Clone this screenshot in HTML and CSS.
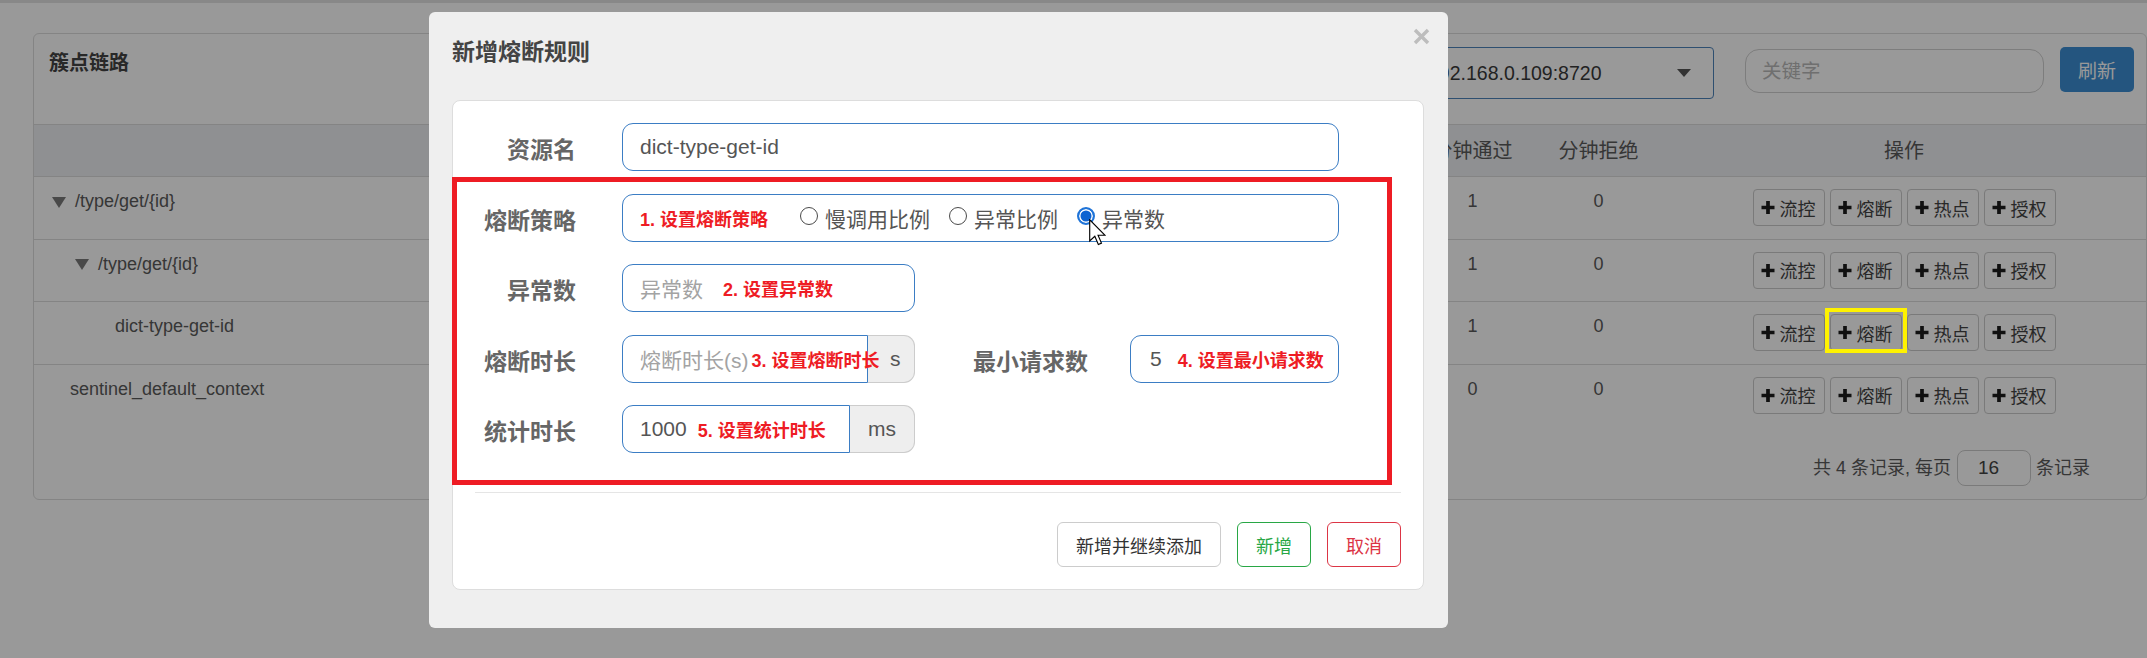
FILE: index.html
```html
<!DOCTYPE html>
<html lang="zh-CN">
<head>
<meta charset="utf-8">
<title>簇点链路</title>
<link rel="stylesheet" href="styles.css">
</head>
<body>
<div class="topbar"></div>
<section class="panel">
  <div class="panel-head">
    <h3 class="panel-title">簇点链路</h3>
    <div class="select"><span>192.168.0.109:8720</span><i class="select-caret"></i></div>
    <div class="search">关键字</div>
    <button class="btn-refresh">刷新</button>
  </div>
  <table class="tree">
    <colgroup>
      <col class="c-res"><col class="c-mid"><col class="c-mid"><col class="c-mid"><col class="c-mid"><col class="c-pass"><col class="c-block"><col class="c-op">
    </colgroup>
    <thead>
      <tr><th>资源名</th><th>通过QPS</th><th>拒绝QPS</th><th>并发数</th><th>平均RT</th><th>分钟通过</th><th>分钟拒绝</th><th>操作</th></tr>
    </thead>
    <tbody>
      <tr>
        <td class="res lv0p"><i class="tri"></i>/type/get/{id}</td>
        <td>1</td><td>0</td><td>0</td><td>2</td><td>1</td><td>0</td>
        <td><div class="ops">
          <button class="op"><svg class="plus" viewBox="0 0 14 14"><path d="M5 0h4v5h5v4H9v5H5V9H0V5h5z"/></svg>流控</button>
          <button class="op"><svg class="plus" viewBox="0 0 14 14"><path d="M5 0h4v5h5v4H9v5H5V9H0V5h5z"/></svg>熔断</button>
          <button class="op"><svg class="plus" viewBox="0 0 14 14"><path d="M5 0h4v5h5v4H9v5H5V9H0V5h5z"/></svg>热点</button>
          <button class="op"><svg class="plus" viewBox="0 0 14 14"><path d="M5 0h4v5h5v4H9v5H5V9H0V5h5z"/></svg>授权</button>
        </div></td>
      </tr>
      <tr>
        <td class="res lv1p"><i class="tri"></i>/type/get/{id}</td>
        <td>1</td><td>0</td><td>0</td><td>2</td><td>1</td><td>0</td>
        <td><div class="ops">
          <button class="op"><svg class="plus" viewBox="0 0 14 14"><path d="M5 0h4v5h5v4H9v5H5V9H0V5h5z"/></svg>流控</button>
          <button class="op"><svg class="plus" viewBox="0 0 14 14"><path d="M5 0h4v5h5v4H9v5H5V9H0V5h5z"/></svg>熔断</button>
          <button class="op"><svg class="plus" viewBox="0 0 14 14"><path d="M5 0h4v5h5v4H9v5H5V9H0V5h5z"/></svg>热点</button>
          <button class="op"><svg class="plus" viewBox="0 0 14 14"><path d="M5 0h4v5h5v4H9v5H5V9H0V5h5z"/></svg>授权</button>
        </div></td>
      </tr>
      <tr>
        <td class="res lv2">dict-type-get-id</td>
        <td>1</td><td>0</td><td>0</td><td>2</td><td>1</td><td>0</td>
        <td><div class="ops">
          <button class="op"><svg class="plus" viewBox="0 0 14 14"><path d="M5 0h4v5h5v4H9v5H5V9H0V5h5z"/></svg>流控</button>
          <button class="op"><svg class="plus" viewBox="0 0 14 14"><path d="M5 0h4v5h5v4H9v5H5V9H0V5h5z"/></svg>熔断<span class="hl"></span></button>
          <button class="op"><svg class="plus" viewBox="0 0 14 14"><path d="M5 0h4v5h5v4H9v5H5V9H0V5h5z"/></svg>热点</button>
          <button class="op"><svg class="plus" viewBox="0 0 14 14"><path d="M5 0h4v5h5v4H9v5H5V9H0V5h5z"/></svg>授权</button>
        </div></td>
      </tr>
      <tr>
        <td class="res lv0">sentinel_default_context</td>
        <td>0</td><td>0</td><td>0</td><td>0</td><td>0</td><td>0</td>
        <td><div class="ops">
          <button class="op"><svg class="plus" viewBox="0 0 14 14"><path d="M5 0h4v5h5v4H9v5H5V9H0V5h5z"/></svg>流控</button>
          <button class="op"><svg class="plus" viewBox="0 0 14 14"><path d="M5 0h4v5h5v4H9v5H5V9H0V5h5z"/></svg>熔断</button>
          <button class="op"><svg class="plus" viewBox="0 0 14 14"><path d="M5 0h4v5h5v4H9v5H5V9H0V5h5z"/></svg>热点</button>
          <button class="op"><svg class="plus" viewBox="0 0 14 14"><path d="M5 0h4v5h5v4H9v5H5V9H0V5h5z"/></svg>授权</button>
        </div></td>
      </tr>
    </tbody>
  </table>
  <div class="pager">共 4 条记录, 每页<span class="page-size">16</span>条记录</div>
</section>

<div class="backdrop"></div>

<div class="modal">
  <h4 class="modal-title">新增熔断规则</h4>
  <svg class="close" viewBox="0 0 17 17"><path d="M2 2L15 15M15 2L2 15"/></svg>
  <div class="card">
    <div class="form">
      <div class="label">资源名</div>
      <div class="field"><span class="val">dict-type-get-id</span></div>

      <div class="label">熔断策略</div>
      <div class="field">
        <span class="note">1. 设置熔断策略</span>
        <span class="radios">
          <span class="radio"><i class="dot"></i>慢调用比例</span>
          <span class="radio"><i class="dot"></i>异常比例</span>
          <span class="radio"><i class="dot on"></i>异常数</span>
        </span>
      </div>

      <div class="label">异常数</div>
      <div class="short">
        <div class="field"><span class="ph">异常数</span><span class="note n2">2. 设置异常数</span></div>
      </div>

      <div class="label">熔断时长</div>
      <div class="pair">
        <div class="group">
          <div class="field"><span class="ph">熔断时长(s)</span><span class="note n3">3. 设置熔断时长</span></div>
          <div class="addon addon-s">s</div>
        </div>
        <div class="sublabel">最小请求数</div>
        <div class="field small"><span class="val">5</span><span class="note n4">4. 设置最小请求数</span></div>
      </div>

      <div class="label">统计时长</div>
      <div class="short">
        <div class="group">
          <div class="field"><span class="val">1000</span><span class="note n5">5. 设置统计时长</span></div>
          <div class="addon addon-ms">ms</div>
        </div>
      </div>
    </div>
    <hr class="divider">
    <div class="actions">
      <button class="btn">新增并继续添加</button>
      <button class="btn btn-ok">新增</button>
      <button class="btn btn-cancel">取消</button>
    </div>
    <div class="mark"></div>
    <svg class="cursor" viewBox="0 0 12 19"><path d="M0.5 0.5L0.5 15.5L4.1 12.2L6.6 18L8.8 17L6.4 11.4L11.2 11.4Z"/></svg>
  </div>
</div>
</body>
</html>
```
FILE: styles.css
```css
* { box-sizing: border-box; margin: 0; padding: 0; }
html, body { width: 2147px; height: 658px; overflow: hidden; }
body {
  background: #fff;
  font-family: "Liberation Sans", "Noto Sans CJK SC", sans-serif;
  color: #5a5a5a;
  position: relative;
}
button { font-family: inherit; cursor: pointer; }

.topbar { height: 3px; background: #e3e3e3; }

/* ---------- panel ---------- */
.panel {
  margin: 30px 0 0 33px;
  width: 2114px;
  border: 1px solid #ddd;
  border-radius: 6px;
}
.panel-head {
  height: 90px;
  display: flex;
  align-items: flex-start;
  padding: 13px 12px 0 15px;
}
.panel-title {
  flex: 1;
  font-size: 20px;
  font-weight: 700;
  line-height: 30px;
  margin-top: 1px;
  color: #444;
}
.select {
  width: 300px;
  height: 52px;
  border: 1px solid #4e84bb;
  border-radius: 4px;
  display: flex;
  align-items: center;
  justify-content: space-between;
  padding: 0 22px 0 13px;
  font-size: 19.5px;
  color: #3a3a3a;
}
.select-caret {
  width: 0; height: 0;
  border-left: 7px solid transparent;
  border-right: 7px solid transparent;
  border-top: 8px solid #555;
}
.search {
  margin: 2px 0 0 31px;
  width: 299px;
  height: 44px;
  border: 1px solid #d0d0d0;
  border-radius: 14px;
  padding-left: 16px;
  font-size: 19.5px;
  line-height: 42px;
  color: #b9b9b9;
}
.btn-refresh {
  margin-left: 16px;
  width: 74px;
  height: 45px;
  border: 0;
  border-radius: 5px;
  background: #3c8ed4;
  color: #fff;
  font-size: 19px;
}

/* ---------- table ---------- */
.tree { width: 100%; table-layout: fixed; border-collapse: collapse; }
.c-res { width: 866px; }
.c-mid { width: 127.5px; }
.c-pass { width: 125px; }
.c-block { width: 127px; }
.c-op { width: 484px; }
.tree th {
  background: #eef0f3;
  border-top: 1px solid #ddd;
  padding: 13.5px 8px;
  font-size: 20px;
  font-weight: 400;
  line-height: 24px;
  color: #5a5a5a;
  text-align: center;
}
.tree td {
  border-top: 1px solid #ddd;
  padding: 12px 8px 12.5px;
  font-size: 18px;
  line-height: 24px;
  vertical-align: top;
  text-align: center;
  white-space: nowrap;
}
.tree td.res { text-align: left; }
.lv0p { padding-left: 18px !important; }
.lv1p { padding-left: 41px !important; }
.lv2 { padding-left: 81px !important; }
.lv0 { padding-left: 36px !important; }
.tri {
  display: inline-block;
  vertical-align: middle;
  width: 0; height: 0;
  border-left: 7px solid transparent;
  border-right: 7px solid transparent;
  border-top: 11px solid #7b7b7b;
  margin-right: 9px;
}
.ops { display: inline-flex; gap: 5px; }
.op {
  position: relative;
  height: 37px;
  width: 72px;
  border: 1px solid #ccc;
  border-radius: 4px;
  background: #fff;
  display: inline-flex;
  align-items: center;
  gap: 5px;
  padding: 0 7px;
  font-size: 18px;
  color: #444;
}
.plus { width: 14px; height: 13px; fill: #1c1c1c; flex: none; }
.hl {
  position: absolute;
  left: -6px; right: -6px; top: -7px; bottom: -3px;
  border: 4px solid #fff200;
  z-index: 30;
}

.pager {
  display: flex;
  justify-content: flex-end;
  align-items: center;
  padding: 24px 56px 13px 0;
  font-size: 18px;
  line-height: 24px;
  color: #5a5a5a;
}
.page-size {
  width: 74px;
  height: 36px;
  border: 1px solid #ccc;
  border-radius: 8px;
  padding-left: 20px;
  line-height: 34px;
  font-size: 19px;
  margin: 0 5px 0 6px;
  color: #444;
}

/* ---------- modal ---------- */
.backdrop {
  position: fixed;
  inset: 0;
  background: rgba(0, 0, 0, 0.4);
  z-index: 10;
}
.modal {
  position: absolute;
  left: 429px;
  top: 12px;
  width: 1019px;
  z-index: 20;
  background: #efefef;
  border-radius: 6px;
  padding: 25px 24px 38px 23px;
}
.modal-title {
  font-size: 23px;
  font-weight: 700;
  line-height: 30px;
  color: #444;
  margin-bottom: 33px;
}
.close {
  position: absolute;
  right: 18px;
  top: 16px;
  width: 17px;
  height: 17px;
  stroke: #bdbdbd;
  stroke-width: 3.4;
  fill: none;
}
.card {
  position: relative;
  background: #fff;
  border: 1px solid #ddd;
  border-radius: 8px;
  padding: 22px;
}
.form {
  display: grid;
  grid-template-columns: 101px 717px;
  grid-auto-rows: 48px;
  column-gap: 46px;
  row-gap: 22.5px;
}
.label, .sublabel {
  font-size: 23px;
  font-weight: 700;
  color: #666;
  text-align: right;
  padding-top: 6px;
  line-height: 42px;
  white-space: nowrap;
}
.field {
  height: 48px;
  min-width: 0;
  border: 1px solid #3b7dc4;
  border-radius: 11px;
  background: #fff;
  display: flex;
  align-items: center;
  padding: 0 17px;
  font-size: 21px;
  color: #555;
  white-space: nowrap;
}
.ph { color: #a3a3a3; flex: none; }
.val { color: #555; flex: none; }
.note {
  position: relative;
  z-index: 1;
  flex: none;
  color: #ee1c24;
  font-size: 18px;
  font-weight: 700;
}
.n2 { margin-left: 20px; }
.n3 { margin-left: 3px; }
.n4 { margin-left: 16px; }
.n5 { margin-left: 11px; }
.radios { display: flex; align-items: center; gap: 19px; margin-left: 32px; }
.radio { display: inline-flex; align-items: center; color: #555; }
.dot {
  width: 18px;
  height: 18px;
  border-radius: 50%;
  border: 1.5px solid #4a4a4a;
  margin-right: 7px;
  margin-top: -3px;
}
.dot.on {
  border: 2px solid #1f74d8;
  background: #0d63d1;
  box-shadow: inset 0 0 0 1.5px #fff;
}
.short { width: 293px; }
.short > .field { width: 293px; }
.group { display: flex; width: 293px; }
.group .field { flex: 1 1 0; border-radius: 11px 0 0 11px; }
.addon {
  flex: none;
  height: 48px;
  background: #eee;
  border: 1px solid #ccc;
  border-left: 0;
  border-radius: 0 11px 11px 0;
  display: flex;
  align-items: center;
  font-size: 21px;
  color: #555;
}
.addon-s { width: 47px; padding-left: 22px; }
.addon-ms { width: 65px; padding-left: 18px; }
.pair { display: flex; }
.sublabel { width: 173px; margin-right: 42px; flex: none; }
.field.small { width: 209px; padding-left: 19px; flex: none; }

.divider {
  border: 0;
  border-top: 1px solid #e5e5e5;
  margin-top: 39px;
}
.actions {
  display: flex;
  justify-content: flex-end;
  gap: 16px;
  padding-top: 29px;
}
.btn {
  height: 45px;
  padding: 0 18px;
  border: 1px solid #ccc;
  border-radius: 6px;
  background: #fff;
  font-size: 18px;
  color: #333;
}
.btn-ok { border-color: #28a745; color: #28a745; }
.btn-cancel { border-color: #dc3545; color: #dc3545; }

.mark {
  position: absolute;
  left: -1px;
  top: 76px;
  width: 940px;
  height: 308px;
  border: 5px solid #ee1c24;
  z-index: 4;
  pointer-events: none;
}
.cursor {
  position: absolute;
  left: 636px;
  top: 118px;
  width: 17px;
  height: 27px;
  fill: #fff;
  stroke: #000;
  stroke-width: 0.8;
  z-index: 5;
}
```
